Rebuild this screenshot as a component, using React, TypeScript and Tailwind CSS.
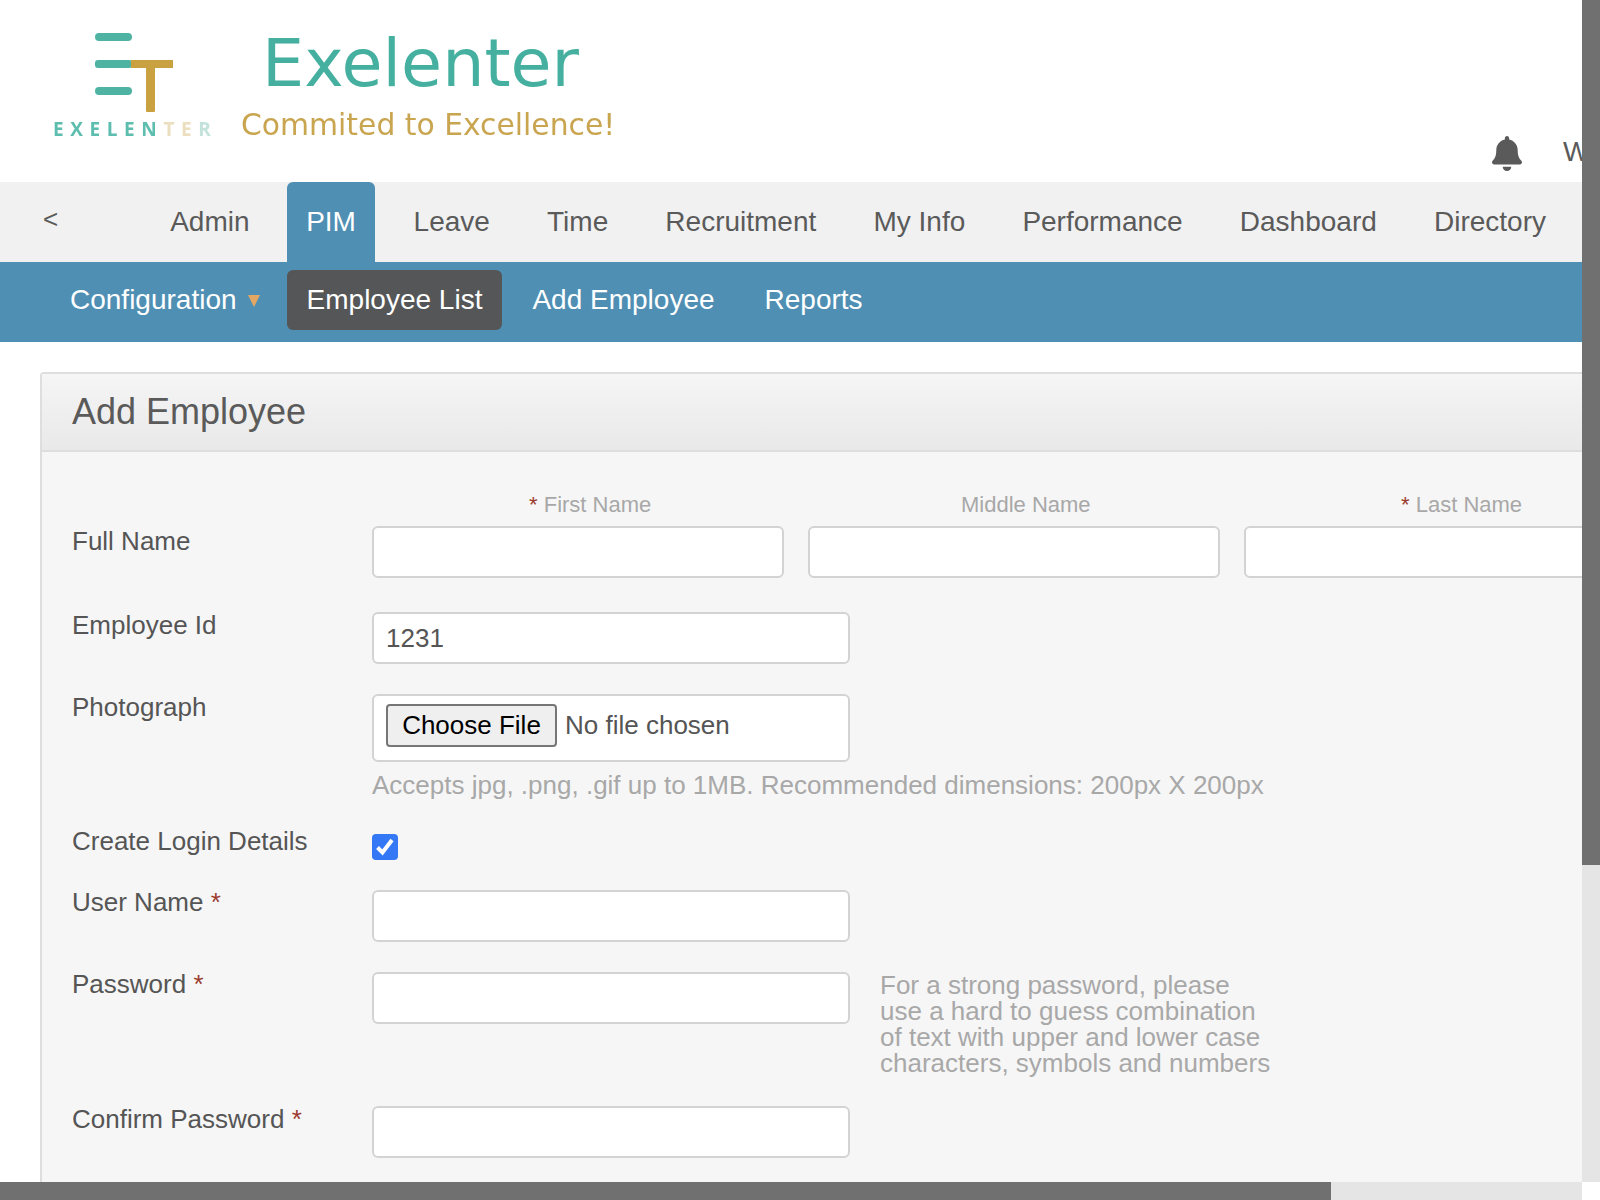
import React from "react";

const inputCls = "block h-[52px] rounded-[6px] border-2 border-[#d3d3d3] bg-white px-[12px] text-[26px] text-[#555] outline-none";

function Star() {
  return <span className="text-[#9c3b2e]">*</span>;
}

function Row({ top, label, labelPad, children }: { top: string; label: React.ReactNode; labelPad: string; children: React.ReactNode }) {
  return (
    <div className={`flex ${top}`}>
      <div className={`w-[300px] shrink-0 text-[26px] leading-[30px] text-[#555] ${labelPad}`}>{label}</div>
      <div className="min-w-0 flex-1">{children}</div>
    </div>
  );
}

function NameCol({ w, required, title, pl }: { w: string; required?: boolean; title: string; pl: string }) {
  return (
    <div className={w}>
      <div className={`h-[36px] text-[22px] leading-[30px] text-[#a8a8a8] ${pl}`}>
        {required && <Star />}
        {required && " "}
        {title}
      </div>
      <input className={`${inputCls} w-full`} />
    </div>
  );
}

export default function App() {
  const tabs = ["Admin", "PIM", "Leave", "Time", "Recruitment", "My Info", "Performance", "Dashboard", "Directory"];
  return (
    <div className="grid h-[1200px] w-[1600px] grid-cols-[1582px_18px] grid-rows-[1182px_18px] overflow-hidden bg-white font-['Liberation_Sans',Arial,sans-serif]">
      <div className="overflow-hidden">
        <div className="w-[1880px]">
          <header className="relative flex h-[182px] bg-white">
            <div className="relative w-[240px] shrink-0">
              <svg className="absolute left-[90px] top-[28px] blur-[0.5px]" width="90" height="90" viewBox="0 0 90 90">
                <g fill="#4fb3a4">
                  <rect x="5" y="5" width="37" height="8" rx="4" />
                  <rect x="5" y="32" width="37" height="8" rx="3" />
                  <rect x="5" y="59" width="37" height="8" rx="4" />
                </g>
                <g fill="#c9a141">
                  <rect x="41" y="32" width="42" height="8" />
                  <rect x="56" y="32" width="9" height="52" rx="1" />
                </g>
              </svg>
              <div className="absolute left-[53px] top-[117px] whitespace-nowrap font-['Open_Sans',sans-serif] text-[19px] font-bold leading-[24px] tracking-[6.6px] text-[#5dbdae] blur-[0.4px]">
                EXELEN<span className="text-[#ecdfc0]">TE</span><span className="text-[#c4e2dc]">R</span>
              </div>
            </div>
            <div className="w-[400px] shrink-0 pt-[17px]">
              <div className="pl-[22px] font-['DejaVu_Sans',sans-serif] text-[66.7px] leading-[92px] text-[#45b0a0] blur-[0.3px]">Exelenter</div>
              <div className="-mt-[2px] pl-[1px] font-['DejaVu_Sans',sans-serif] text-[29.8px] leading-[36px] text-[#c9a550] blur-[0.3px]">Commited to Excellence!</div>
            </div>
            <div className="flex items-start pl-[852px] pt-[134px] text-[28px] leading-[36px] text-[#5a5a5a]">
              <svg className="mt-[2px] shrink-0" width="30" height="35" viewBox="0 0 448 512" preserveAspectRatio="none" fill="#5a5a5a">
                <path d="M224 512c35.3 0 64-28.7 64-64H160c0 35.3 28.7 64 64 64zm215.4-149.7c-19.300-20.800-55.500-52-55.500-154.300 0-77.700-54.500-139.900-127.900-155.200V32c0-17.700-14.300-32-32-32s-32 14.300-32 32v20.800C118.600 68.100 64.100 130.300 64.100 208c0 102.300-36.200 133.500-55.500 154.300-6 6.400-8.700 14.100-8.600 21.700 .1 16.400 13 32 32.100 32h383.800c19.100 0 32-15.600 32.100-32 .1-7.600-2.600-15.300-8.600-21.700z" />
              </svg>
              <span className="ml-[41px] whitespace-nowrap">Welcome Admin</span>
            </div>
          </header>

          <nav className="flex h-[80px] items-stretch gap-[19.15px] bg-[#f1f1f1] text-[28px] text-[#5a5a5a]">
            <div className="w-[131px] shrink-0 pl-[43px] pt-[22px] text-[26px] leading-[30px]">&lt;</div>
            {tabs.map((t) =>
              t === "PIM" ? (
                <div key={t} className="flex items-center rounded-t-[6px] bg-[#4f8fb4] px-[19.5px] pb-[1px] text-white">{t}</div>
              ) : t === "Admin" ? (
                <div key={t} className="flex items-center pb-[1px] pl-[20px] pr-[18px]">{t}</div>
              ) : (
                <div key={t} className="flex items-center px-[19px] pb-[1px]">{t}</div>
              )
            )}
          </nav>

          <div className="flex h-[80px] items-center bg-[#4f8fb4] pb-[4px] pl-[70px] text-[28px] text-white">
            <span>Configuration</span>
            <svg className="ml-[11px] mt-[2px]" width="12" height="12" viewBox="0 0 12 12"><path d="M0 0H12L6 12Z" fill="#e2a863" /></svg>
            <div className="ml-[27px] flex h-[60px] items-center rounded-[6px] bg-[#555658] px-[20px]">Employee List</div>
            <span className="ml-[30px]">Add Employee</span>
            <span className="ml-[50px]">Reports</span>
          </div>

          <main className="pl-[40px] pt-[30px]">
            <div className="rounded-t-[4px] border-2 border-b-0 border-[#dedede] bg-[#f6f6f6]">
              <div className="flex h-[78px] items-center border-b-2 border-[#dedede] bg-gradient-to-b from-[#f5f5f5] to-[#e9e9e9] pl-[30px] text-[36px] text-[#5a5a5a]">
                Add Employee
              </div>
              <div className="h-[800px] pl-[30px]">
                <Row top="pt-[38px]" labelPad="pt-[36px]" label="Full Name">
                  <div className="flex gap-[24px]">
                    <NameCol w="w-[412px]" required title="First Name" pl="pl-[157px]" />
                    <NameCol w="w-[412px]" title="Middle Name" pl="pl-[153px]" />
                    <NameCol w="w-[412px]" required title="Last Name" pl="pl-[157px]" />
                  </div>
                </Row>
                <Row top="pt-[34px]" labelPad="-mt-[2px]" label="Employee Id">
                  <input className={`${inputCls} w-[478px]`} defaultValue="1231" />
                </Row>
                <Row top="pt-[30px]" labelPad="-mt-[2px]" label="Photograph">
                  <div className="flex h-[68px] w-[478px] items-center rounded-[6px] border-2 border-[#d3d3d3] bg-white pb-[6px] pl-[12px] text-[26px] text-[#555]">
                    <div className="flex h-[43px] w-[171px] items-center justify-center rounded-[4px] border-2 border-[#767676] bg-[#efefef] text-black">Choose File</div>
                    <span className="ml-[8px]">No file chosen</span>
                  </div>
                  <div className="mt-[8px] whitespace-nowrap text-[26px] leading-[30px] text-[#a8a8a8]">Accepts jpg, .png, .gif up to 1MB. Recommended dimensions: 200px X 200px</div>
                </Row>
                <Row top="pt-[26px]" labelPad="" label="Create Login Details">
                  <div className="mt-[8px] flex h-[26px] w-[26px] items-center justify-center rounded-[4px] bg-[#3478f6]">
                    <svg width="26" height="26" viewBox="0 0 26 26" fill="none"><path d="M5.500 13.500 10.500 18.500 20 6" stroke="#fff" strokeWidth="4" /></svg>
                  </div>
                </Row>
                <Row top="pt-[30px]" labelPad="-mt-[3px]" label={<>User Name <Star /></>}>
                  <input className={`${inputCls} w-[478px]`} />
                </Row>
                <Row top="pt-[30px]" labelPad="-mt-[3px]" label={<>Password <Star /></>}>
                  <div className="flex">
                    <input className={`${inputCls} w-[478px] shrink-0`} />
                    <div className="ml-[30px] w-[400px] whitespace-pre text-[26px] leading-[26px] text-[#a8a8a8]">{"For a strong password, please\nuse a hard to guess combination\nof text with upper and lower case\ncharacters, symbols and numbers"}</div>
                  </div>
                </Row>
                <Row top="pt-[30px]" labelPad="-mt-[2px]" label={<>Confirm Password <Star /></>}>
                  <input className={`${inputCls} w-[478px]`} />
                </Row>
              </div>
            </div>
          </main>
        </div>
      </div>
      <div className="flex flex-col bg-[#e5e5e5]"><div className="h-[865px] bg-[#707070]" /></div>
      <div className="bg-[#e5e5e5]"><div className="h-[18px] w-[1331px] bg-[#707070]" /></div>
      <div className="bg-white" />
    </div>
  );
}
